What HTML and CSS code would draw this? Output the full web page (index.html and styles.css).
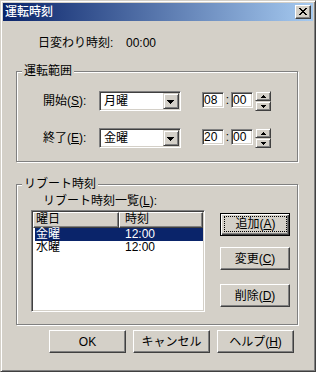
FILE: index.html
```html
<!DOCTYPE html>
<html lang="ja">
<head>
<meta charset="utf-8">
<link rel="stylesheet" href="styles.css">
</head>
<body>
<div class="win">
  <div class="titlebar">
    <span class="title">運転時刻</span>
    <span class="capbtn">
      <svg width="8" height="7" viewBox="0 0 8 7" shape-rendering="crispEdges"><path d="M0 0h2v1h-2zM6 0h2v1h-2zM1 1h2v1h-2zM5 1h2v1h-2zM2 2h4v1h-4zM3 3h2v1h-2zM2 4h4v1h-4zM1 5h2v1h-2zM5 5h2v1h-2zM0 6h2v1h-2zM6 6h2v1h-2z" fill="#000"/></svg>
    </span>
  </div>
  <div class="body">
    <div class="dayrow"><span class="daylabel">日変わり時刻:</span><span>00:00</span></div>

    <div class="group g1">
      <div class="legend">運転範囲</div>
      <div class="row r1">
        <span class="lbl">開始(<u>S</u>):</span>
        <div class="combo"><span class="ctext">月曜</span><span class="ddbtn"><svg width="7" height="4" viewBox="0 0 7 4" shape-rendering="crispEdges"><path d="M0 0h7v1h-1v1h-1v1h-1v1h-1v-1h-1v-1h-1v-1h-1z" fill="#000"/></svg></span></div>
        <div class="time">
          <span class="tbox">08</span><span class="colon">:</span><span class="tbox">00</span>
          <div class="spin">
            <span class="sbtn"><svg width="5" height="3" viewBox="0 0 5 3" shape-rendering="crispEdges"><path d="M2 0h1v1h1v1h1v1h-5v-1h1v-1h1z" fill="#000"/></svg></span>
            <span class="sbtn"><svg width="5" height="3" viewBox="0 0 5 3" shape-rendering="crispEdges"><path d="M0 0h5v1h-1v1h-1v1h-1v-1h-1v-1h-1z" fill="#000"/></svg></span>
          </div>
        </div>
      </div>
      <div class="row r2">
        <span class="lbl">終了(<u>E</u>):</span>
        <div class="combo"><span class="ctext">金曜</span><span class="ddbtn"><svg width="7" height="4" viewBox="0 0 7 4" shape-rendering="crispEdges"><path d="M0 0h7v1h-1v1h-1v1h-1v1h-1v-1h-1v-1h-1v-1h-1z" fill="#000"/></svg></span></div>
        <div class="time">
          <span class="tbox">20</span><span class="colon">:</span><span class="tbox">00</span>
          <div class="spin">
            <span class="sbtn"><svg width="5" height="3" viewBox="0 0 5 3" shape-rendering="crispEdges"><path d="M2 0h1v1h1v1h1v1h-5v-1h1v-1h1z" fill="#000"/></svg></span>
            <span class="sbtn"><svg width="5" height="3" viewBox="0 0 5 3" shape-rendering="crispEdges"><path d="M0 0h5v1h-1v1h-1v1h-1v-1h-1v-1h-1z" fill="#000"/></svg></span>
          </div>
        </div>
      </div>
    </div>

    <div class="group g2">
      <div class="legend">リブート時刻</div>
      <div class="listlabel">リブート時刻一覧(<u>L</u>):</div>
      <div class="listrow">
        <div class="list">
          <div class="lhead"><span class="hc hc1">曜日</span><span class="hc hc2">時刻</span></div>
          <div class="lrow sel"><span class="c1">金曜</span><span class="c2">12:00</span></div>
          <div class="lrow"><span class="c1">水曜</span><span class="c2">12:00</span></div>
        </div>
        <div class="sidebtns">
          <div class="btn default"><span class="focus">追加(<u>A</u>)</span></div>
          <div class="btn b2">変更(<u>C</u>)</div>
          <div class="btn b3">削除(<u>D</u>)</div>
        </div>
      </div>
    </div>

    <div class="footer">
      <div class="btn fbtn">OK</div>
      <div class="btn fbtn">キャンセル</div>
      <div class="btn fbtn">ヘルプ(<u>H</u>)</div>
    </div>
  </div>
</div>
</body>
</html>
```
FILE: styles.css
```css
* { box-sizing: border-box; }
html, body { margin: 0; padding: 0; background: #D4D0C8; }
body {
  font-family: "Liberation Sans", "Noto Sans CJK JP", sans-serif;
  font-size: 12px;
  line-height: 14px;
  color: #000;
}
u { text-decoration: underline; text-underline-offset: 1px; }

.win {
  width: 316px;
  height: 372px;
  background: #D4D0C8;
  border: 1px solid;
  border-color: #D4D0C8 #404040 #404040 #D4D0C8;
  box-shadow: inset 1px 1px #fff, inset -1px -1px #808080;
  padding: 2px;
  display: flex;
  flex-direction: column;
}

.titlebar {
  height: 18px;
  flex: none;
  display: flex;
  align-items: center;
  padding: 0 2px;
  background: linear-gradient(to right, #0A246A, #A6CAF0);
  color: #fff;
}
.title { font-weight: 500; font-size: 12px; line-height: 14px; }
.capbtn {
  margin-left: auto;
  width: 16px;
  height: 14px;
  background: #D4D0C8;
  border: 1px solid;
  border-color: #fff #404040 #404040 #fff;
  box-shadow: inset -1px -1px #808080;
  display: flex;
  align-items: center;
  justify-content: center;
  padding: 0 1px 1px 0;
}
.capbtn svg { display: block; }

.body {
  padding: 0 15px 0 13px;
  display: flex;
  flex-direction: column;
}

.dayrow {
  margin-top: 15px;
  padding-left: 22px;
  display: flex;
  height: 14px;
}
.daylabel { width: 88px; }

.group {
  border: 1px solid #808080;
  box-shadow: inset 1px 1px #fff, 1px 1px #fff;
  display: flex;
  flex-direction: column;
}
.g1 { margin-top: 21px; padding-bottom: 13px; }
.g2 { margin-top: 22px; padding-bottom: 12px; }

.legend {
  align-self: flex-start;
  margin-top: -8px;
  margin-left: 5px;
  padding: 0 2px;
  height: 14px;
  background: #D4D0C8;
  white-space: nowrap;
}

.row {
  display: flex;
  align-items: center;
  height: 20px;
  padding-left: 26px;
}
.r1 { margin-top: 13px; }
.r2 { margin-top: 17px; }
.lbl { width: 56px; white-space: nowrap; }

.combo {
  width: 82px;
  height: 20px;
  background: #fff;
  border: 1px solid;
  border-color: #808080 #fff #fff #808080;
  box-shadow: inset 1px 1px #404040, inset -1px -1px #D4D0C8;
  display: flex;
  align-items: center;
  padding: 1px;
}
.ctext { flex: 1; padding-left: 3px; line-height: 14px; }
.ddbtn {
  width: 16px;
  height: 16px;
  background: #D4D0C8;
  border: 1px solid;
  border-color: #D4D0C8 #404040 #404040 #D4D0C8;
  box-shadow: inset 1px 1px #fff, inset -1px -1px #808080;
  display: flex;
  align-items: center;
  justify-content: center;
  padding: 1px 1px 0 0;
}
.ddbtn svg { display: block; }

.time {
  margin-left: 21px;
  display: flex;
  align-items: flex-start;
  height: 20px;
}
.tbox {
  margin-top: 1px;
  width: 22px;
  height: 16px;
  background: #fff;
  border: 1px solid;
  border-color: #808080 #fff #fff #808080;
  box-shadow: inset 1px 1px #404040, inset -1px -1px #D4D0C8;
  padding-left: 1px;
  line-height: 14px;
}
.colon { width: 7px; text-align: center; margin-top: 2px; line-height: 14px; }
.spin {
  margin-left: 2px;
  width: 16px;
  height: 20px;
  display: flex;
  flex-direction: column;
}
.sbtn {
  height: 10px;
  background: #D4D0C8;
  border: 1px solid;
  border-color: #D4D0C8 #404040 #404040 #D4D0C8;
  box-shadow: inset 1px 1px #fff, inset -1px -1px #808080;
  display: flex;
  align-items: center;
  justify-content: center;
}
.sbtn svg { display: block; }

.listlabel {
  margin-top: 3px;
  padding-left: 26px;
  height: 14px;
}
.listrow {
  margin-top: 2px;
  display: flex;
  align-items: flex-start;
  padding-left: 14px;
}
.list {
  width: 174px;
  height: 102px;
  background: #fff;
  border: 1px solid;
  border-color: #808080 #fff #fff #808080;
  box-shadow: inset 1px 1px #404040, inset -1px -1px #D4D0C8;
  padding: 1px;
  display: flex;
  flex-direction: column;
}
.lhead { display: flex; height: 16px; flex: none; }
.hc {
  height: 16px;
  background: #D4D0C8;
  border: 1px solid;
  border-color: #fff #404040 #404040 #fff;
  box-shadow: inset -1px -1px #808080;
  line-height: 13px;
}
.hc1 { width: 86px; padding-left: 2px; }
.hc2 { flex: 1; padding-left: 5px; }
.lrow {
  display: flex;
  height: 13px;
  line-height: 13px;
  margin-left: 2px;
}
.lrow .c1 { width: 84px; padding-left: 1px; }
.lrow .c2 { flex: 1; padding-left: 6px; }
.lrow.sel { background: #0A246A; color: #fff; }

.sidebtns {
  margin-left: 15px;
  display: flex;
  flex-direction: column;
}
.btn {
  height: 23px;
  background: #D4D0C8;
  border: 1px solid;
  border-color: #fff #404040 #404040 #fff;
  box-shadow: inset -1px -1px #808080;
  display: flex;
  align-items: center;
  justify-content: center;
  white-space: nowrap;
}
.sidebtns .btn { width: 70px; }
.btn.default {
  margin-top: 3px;
  border-color: #000;
  box-shadow: inset 1px 1px #fff, inset -1px -1px #404040, inset -2px -2px #808080;
  padding: 2px 2px 3px 3px;
}
.focus {
  flex: 1;
  align-self: stretch;
  border: 1px dotted #000;
  display: flex;
  align-items: center;
  justify-content: center;
}
.b2 { margin-top: 11px; }
.b3 { margin-top: 14px; }

.footer {
  margin-top: 5px;
  padding-left: 33px;
  display: flex;
  gap: 7px;
}
.fbtn { width: 77px; }
```
